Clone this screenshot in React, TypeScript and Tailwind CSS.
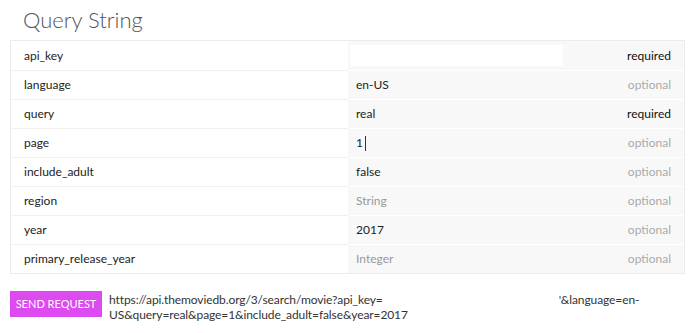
import React from "react";

type Row = { name: string; value: string; placeholder?: boolean; required?: boolean; cursor?: boolean; input?: boolean };

const rows: Row[] = [
  { name: "api_key", value: "", required: true, input: true },
  { name: "language", value: "en-US" },
  { name: "query", value: "real", required: true },
  { name: "page", value: "1", cursor: true },
  { name: "include_adult", value: "false" },
  { name: "region", value: "String", placeholder: true },
  { name: "year", value: "2017" },
  { name: "primary_release_year", value: "Integer", placeholder: true },
];

export default function App() {
  return (
    <div className="w-[690px] h-[333px] bg-white text-[12px] text-[#222]" style={{ fontFamily: "Lato, 'Noto Sans', sans-serif" }}>
      <h2 className="pl-[23px] pt-[6px] h-[40px] text-[22px] font-light text-[#555] leading-[28px]">Query String</h2>
      <div className="ml-[10px] w-[675px] border border-[#ececec]">
        {rows.map((r, i) => (
          <div key={r.name} className={`grid grid-cols-[337px_1fr] h-[29px] ${i > 0 ? "border-t border-[#f0f0f0]" : ""}`}>
            <div className="flex items-center pl-[13px] text-[#222]">{r.name}</div>
            <div className={`flex items-center bg-[#f8f8f8] pr-[13px] ${i > 0 ? "border-t border-white -mt-px" : ""}`}>
              {r.input ? (
                <div className="ml-[2px] w-[213px] h-[21px] bg-white" />
              ) : (
                <div className={`pl-[8px] flex items-center ${r.placeholder ? "text-[#999]" : "text-[#222]"}`}>
                  {r.value}
                  {r.cursor && <span className="ml-[2px] inline-block w-[1.5px] h-[15px] bg-[#333]" />}
                </div>
              )}
              <div className={`ml-auto ${r.required ? "text-[#111]" : "text-[#aaa]"}`}>{r.required ? "required" : "optional"}</div>
            </div>
          </div>
        ))}
      </div>
      <div className="flex items-start mt-[17px] ml-[10px]">
        <div className="w-[92px] h-[26px] flex items-center justify-center bg-[#dc4af0] text-white text-[11px] shrink-0">SEND REQUEST</div>
        <div className="ml-[7px] mt-[1px] w-[545px] leading-[15px] text-[#333] tracking-[-0.1px]">
          <span>https://api.themoviedb.org/3/search/movie?api_key=</span>
          <span className="inline-block w-[176px] h-[1px]" />
          <span>'&amp;language=en-US&amp;query=real&amp;page=1&amp;include_adult=false&amp;year=2017</span>
        </div>
      </div>
    </div>
  );
}
